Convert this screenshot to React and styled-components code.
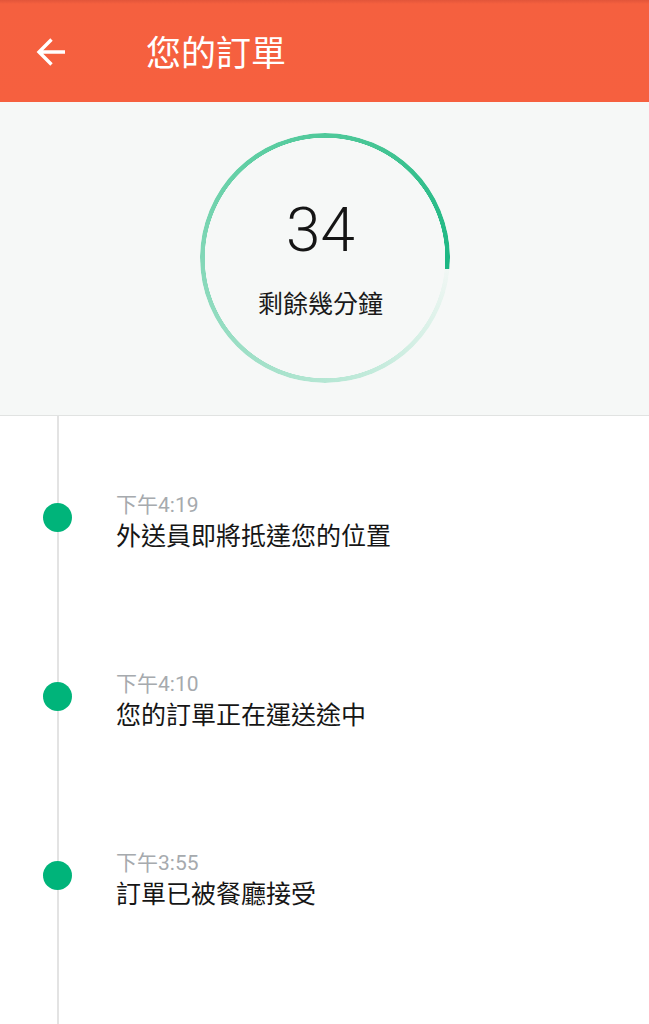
import React from "react";
import styled, { createGlobalStyle } from "styled-components";

const GlobalStyle = createGlobalStyle`
  html, body {
    margin: 0;
    padding: 0;
    background: #ffffff;
  }
  body {
    font-family: Roboto, "Noto Sans CJK TC", "Noto Sans", sans-serif;
    -webkit-font-smoothing: antialiased;
  }
  * { box-sizing: border-box; }
`;

const Page = styled.div`
  width: 100%;
  min-height: 100vh;
  display: flex;
  flex-direction: column;
  background: #ffffff;
`;

const Header = styled.header`
  height: 102px;
  display: flex;
  align-items: center;
  background: linear-gradient(to bottom, #e2553a 0px, #f5603f 4px, #f6603f 100%);
  color: #ffffff;
`;

const BackButton = styled.button`
  width: 102px;
  height: 102px;
  border: none;
  background: transparent;
  display: flex;
  align-items: center;
  justify-content: center;
  padding: 2px 0 0 0;
  cursor: pointer;
`;

const Title = styled.h1`
  margin: -2px 0 0 44px;
  font-family: "Noto Sans CJK TC", sans-serif;
  font-size: 35px;
  font-weight: 400;
  line-height: 1;
`;

const Summary = styled.section`
  height: 314px;
  background: #f6f8f7;
  border-bottom: 1px solid #e1e3e2;
  display: flex;
  justify-content: center;
  padding-top: 31px;
`;

const Ring = styled.div`
  position: relative;
  width: 250px;
  height: 250px;
  display: flex;
  flex-direction: column;
  align-items: center;
  padding: 66px 8px 0 0;

  &::before {
    content: "";
    position: absolute;
    inset: 0;
    border-radius: 50%;
    background: conic-gradient(
      from 95deg,
      #f1f7f4 0deg,
      #c4ebdc 60deg,
      #a6e2cb 110deg,
      #82d7b7 175deg,
      #5ecea3 230deg,
      #45c594 290deg,
      #1cb783 357deg,
      #1cb783 360deg
    );
    -webkit-mask: radial-gradient(farthest-side, transparent calc(100% - 5px), #000 calc(100% - 4.5px));
    mask: radial-gradient(farthest-side, transparent calc(100% - 5px), #000 calc(100% - 4.5px));
  }
`;

const Minutes = styled.div`
  font-family: Roboto, sans-serif;
  font-weight: 300;
  font-size: 62px;
  line-height: 62px;
  color: #151515;
`;

const MinutesLabel = styled.div`
  margin-top: 26px;
  font-family: "Noto Sans CJK TC", sans-serif;
  font-size: 25px;
  line-height: 30px;
  color: #1a1a1a;
`;

const Timeline = styled.ol`
  flex: 1;
  margin: 0;
  padding: 12px 0 0 0;
  list-style: none;
  background: linear-gradient(
    to right,
    transparent 57px,
    #e3e3e3 57px,
    #e3e3e3 59px,
    transparent 59px
  );
`;

const Step = styled.li`
  height: 179px;
  display: grid;
  grid-template-columns: 116px 1fr;
  align-items: center;
`;

const Dot = styled.span`
  justify-self: start;
  margin-left: 43px;
  width: 29px;
  height: 29px;
  border-radius: 50%;
  background: ${(p) => p.color || "#00b47a"};
`;

const StepText = styled.div`
  margin-top: 8px;
  display: flex;
  flex-direction: column;
`;

const Time = styled.span`
  font-family: Roboto, "Noto Sans CJK TC", sans-serif;
  font-size: 21px;
  line-height: 25px;
  color: #a6aaae;
`;

const Message = styled.span`
  font-family: "Noto Sans CJK TC", sans-serif;
  font-size: 25px;
  line-height: 32px;
  color: #161616;
`;

const steps = [
  { time: "下午4:19", text: "外送員即將抵達您的位置" },
  { time: "下午4:10", text: "您的訂單正在運送途中" },
  { time: "下午3:55", text: "訂單已被餐廳接受" },
];

function BackArrow() {
  return (
    <svg width="32" height="32" viewBox="0 0 32 32" fill="none">
      <path
        d="M30 16H4M16.5 3.5L4 16L16.5 28.5"
        stroke="#ffffff"
        strokeWidth="3.4"
        strokeLinecap="butt"
        strokeLinejoin="miter"
      />
    </svg>
  );
}

export default function App() {
  return (
    <>
      <GlobalStyle />
      <Page>
        <Header>
          <BackButton aria-label="返回">
            <BackArrow />
          </BackButton>
          <Title>您的訂單</Title>
        </Header>

        <Summary>
          <Ring>
            <Minutes>34</Minutes>
            <MinutesLabel>剩餘幾分鐘</MinutesLabel>
          </Ring>
        </Summary>

        <Timeline>
          {steps.map((s) => (
            <Step key={s.time}>
              <Dot />
              <StepText>
                <Time>{s.time}</Time>
                <Message>{s.text}</Message>
              </StepText>
            </Step>
          ))}
        </Timeline>
      </Page>
    </>
  );
}
